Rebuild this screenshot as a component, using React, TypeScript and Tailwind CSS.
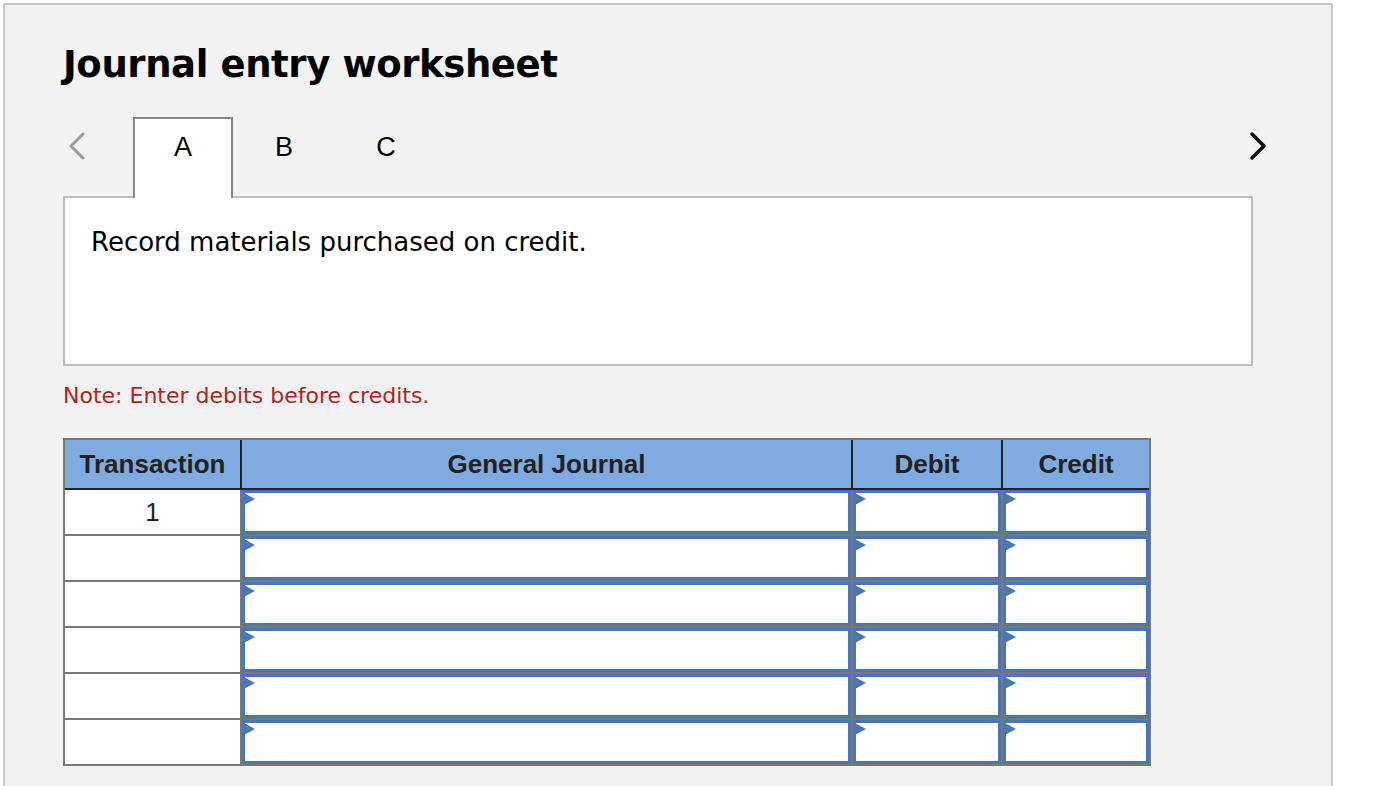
import React from 'react';

const columns = [
  { label: 'Transaction', width: 'w-[175px]' },
  { label: 'General Journal', width: 'w-[611px]' },
  { label: 'Debit', width: 'w-[150px]' },
  { label: 'Credit', width: 'w-[148px]' },
];

function InputCell({ width }: { width: string }) {
  return (
    <div className={`${width} border-l-2 border-[#777777] h-full`}>
      <div className="relative h-full border-[3px] border-[#4a76b5] bg-white">
        <svg className="absolute -left-[3px] -top-[1px] w-[13px] h-[14px]" viewBox="0 0 13 14">
          <polygon points="0,0 13,7 0,14" fill="#4a76b5" />
        </svg>
      </div>
    </div>
  );
}

export default function App() {
  const rows = ['1', '', '', '', '', ''];

  return (
    <div className="min-h-screen bg-white pt-[3px] pl-[3px] font-['Liberation_Sans',Arial,sans-serif]">
      <div className="w-[1330px] min-h-[800px] border-2 border-[#c8c8c8] bg-[#f2f2f2] pl-[58px] pt-[35px] pb-10">
        <h1 className="font-['DejaVu_Sans',Verdana,sans-serif] font-bold text-[37px] leading-[50px] text-black tracking-[-0.4px]">
          Journal entry worksheet
        </h1>

        {/* tabs */}
        <div className="mt-[27px] w-[1206px] flex items-end justify-between">
          <div className="flex items-end">
            <div className="w-[70px] h-[79px] flex items-start pt-[14px] pl-[3px]">
              <svg width="22" height="30" viewBox="0 0 22 30" fill="none">
                <polyline points="17,3 5,15 17,27" stroke="#9a9a9a" strokeWidth="3" strokeLinecap="round" strokeLinejoin="round" />
              </svg>
            </div>
            <div className="relative z-10 -mb-[2px] w-[100px] h-[81px] border-2 border-b-0 border-[#888888] bg-white flex justify-center pt-[13px] text-[27px] leading-[30px] text-black">
              A
            </div>
            <div className="w-[102px] h-[79px] flex justify-center pt-[15px] text-[27px] leading-[30px] text-black">B</div>
            <div className="w-[102px] h-[79px] flex justify-center pt-[15px] text-[27px] leading-[30px] text-black">C</div>
          </div>
          <div className="h-[79px] pt-[14px]">
            <svg width="22" height="30" viewBox="0 0 22 30" fill="none">
              <polyline points="5,3 17,15 5,27" stroke="#111111" strokeWidth="3.5" strokeLinecap="round" strokeLinejoin="round" />
            </svg>
          </div>
        </div>

        <div className="w-[1190px] h-[170px] border-2 border-[#bdbdbd] bg-white px-[26px] pt-[27px]">
          <p className="font-['DejaVu_Sans',Tahoma,sans-serif] text-[26px] leading-[34px] text-black">
            Record materials purchased on credit.
          </p>
        </div>

        <p className="mt-[15px] font-['DejaVu_Sans',Tahoma,sans-serif] text-[22px] leading-[30px] text-[#b22222]">
          Note: Enter debits before credits.
        </p>

        {/* journal table */}
        <div className="mt-[27px] w-[1088px] border-2 border-[#777777] bg-white">
          <div className="flex h-[50px] bg-[#80abe0] border-b-2 border-[#222222]">
            {columns.map((col, i) => (
              <div
                key={col.label}
                className={`${col.width} ${i > 0 ? 'border-l-2 border-[#222222]' : ''} flex items-center justify-center font-bold text-[26px] text-[#222222]`}
              >
                {col.label}
              </div>
            ))}
          </div>
          {rows.map((t, r) => (
            <div key={r} className={`flex h-[44px] ${r > 0 ? 'border-t-2 border-[#777777] box-content' : ''}`}>
              <div className="w-[175px] flex items-center justify-center text-[26px] text-[#222222]">{t}</div>
              <InputCell width="w-[611px]" />
              <InputCell width="w-[150px]" />
              <InputCell width="w-[148px]" />
            </div>
          ))}
        </div>
      </div>
    </div>
  );
}
